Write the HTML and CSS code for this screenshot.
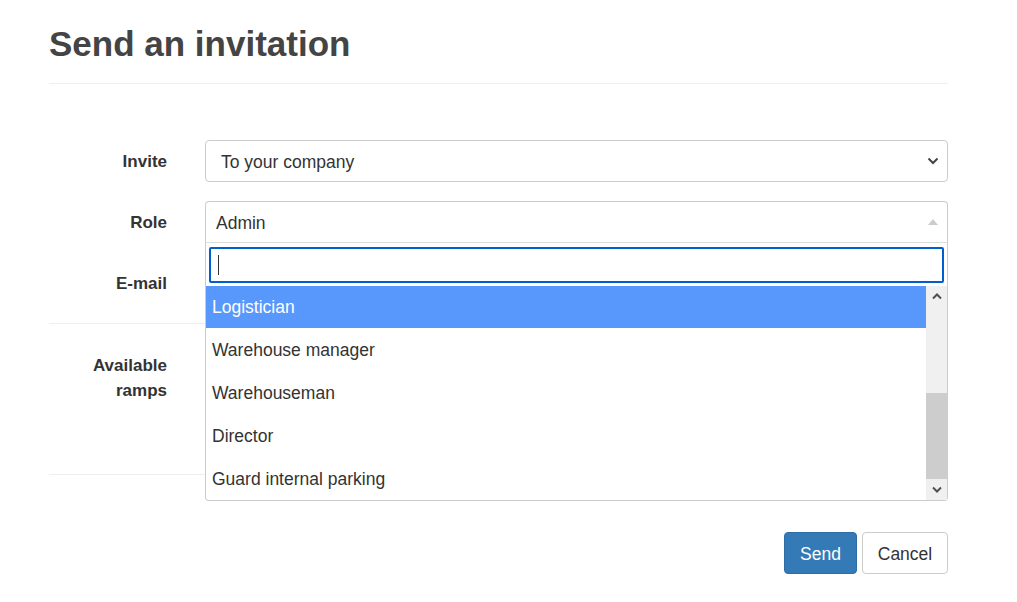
FILE: index.html
```html
<!DOCTYPE html>
<html>
<head>
<meta charset="utf-8">
<link rel="stylesheet" href="styles.css">
</head>
<body>
<div class="container">
  <h1 class="page-title">Send an invitation</h1>
  <form class="form">
    <div class="row">
      <label class="label">Invite</label>
      <div class="field">
        <div class="select">
          <span class="val">To your company</span>
          <svg class="chev" width="12" height="8" viewBox="0 0 12 8"><path d="M1.5 1.5 L6 6 L10.5 1.5" fill="none" stroke="#444" stroke-width="2"/></svg>
        </div>
      </div>
    </div>
    <div class="row">
      <label class="label">Role</label>
      <div class="field role-field">
        <div class="select2 open">
          <span class="val">Admin</span>
          <span class="tri"></span>
        </div>
        <div class="dropdown">
          <div class="search"><span class="caret"></span></div>
          <div class="results">
            <ul class="options">
              <li class="opt active">Logistician</li>
              <li class="opt">Warehouse manager</li>
              <li class="opt">Warehouseman</li>
              <li class="opt">Director</li>
              <li class="opt">Guard internal parking</li>
            </ul>
            <div class="scrollbar">
              <div class="sb-btn"><svg width="10" height="7" viewBox="0 0 10 7"><path d="M1 5.5 L5 1.5 L9 5.5" fill="none" stroke="#505050" stroke-width="2"/></svg></div>
              <div class="sb-track"><div class="sb-thumb"></div></div>
              <div class="sb-btn"><svg width="10" height="7" viewBox="0 0 10 7"><path d="M1 1.5 L5 5.5 L9 1.5" fill="none" stroke="#505050" stroke-width="2"/></svg></div>
            </div>
          </div>
        </div>
      </div>
    </div>
    <div class="row">
      <label class="label">E-mail</label>
      <div class="field">
        <div class="input"></div>
      </div>
    </div>
    <hr class="sep">
    <div class="row ramps">
      <label class="label">Available<br>ramps</label>
      <div class="field"></div>
    </div>
    <hr class="sep">
    <div class="actions">
      <button type="button" class="btn btn-primary">Send</button>
      <button type="button" class="btn btn-default">Cancel</button>
    </div>
  </form>
</div>
</body>
</html>
```
FILE: styles.css
```css
* { box-sizing: border-box; }
body {
  margin: 0;
  font-family: "Liberation Sans", Arial, sans-serif;
  font-size: 17.5px;
  color: #333;
  background: #fff;
}
.container {
  width: 899px;
  margin-left: 49px;
}
.page-title {
  margin: 24px 0 0;
  font-size: 35px;
  line-height: 40px;
  font-weight: bold;
  color: #444;
  padding-bottom: 19px;
  border-bottom: 1px solid #eee;
}
.form {
  margin-top: 56px;
}
.row {
  display: grid;
  grid-template-columns: 118px 1fr;
  column-gap: 38px;
  margin-bottom: 19px;
}
.label {
  text-align: right;
  font-weight: bold;
  font-size: 17px;
  padding-top: 9px;
  line-height: 25px;
}
.field { position: relative; }
.select, .select2, .input {
  height: 42px;
  border: 1px solid #ccc;
  border-radius: 4px;
  display: flex;
  align-items: center;
  background: #fff;
}
.val { padding-top: 2px; }
.select { padding-left: 15px; padding-right: 8px; justify-content: space-between; }
.select2 { padding-left: 10px; padding-right: 9px; justify-content: space-between; }
.select2.open { border-radius: 4px 4px 0 0; border-bottom-color: #ddd; }
.tri {
  width: 0; height: 0;
  border-left: 5px solid transparent;
  border-right: 5px solid transparent;
  border-bottom: 6px solid #ccc;
}
.dropdown {
  position: absolute;
  left: 0; right: 0;
  top: 42px;
  background: #fff;
  border: 1px solid #ccc;
  border-top: none;
  border-radius: 0 0 4px 4px;
  padding-top: 4px;
  z-index: 10;
}
.search {
  margin: 0 3px 3px;
  height: 36px;
  border: 2px solid #005fcc;
  border-radius: 2px;
  display: flex;
  align-items: center;
  padding-left: 7px;
}
.caret {
  width: 1px;
  height: 20px;
  background: #333;
}
.results {
  display: flex;
  height: 214px;
  overflow: hidden;
}
.options {
  list-style: none;
  margin: 0;
  padding: 0;
  flex: 1;
}
.opt {
  height: 43px;
  line-height: 42px;
  padding-top: 1px;
  padding-left: 6px;
}
.opt.active { background: #5897fb; color: #fff; height: 42px; line-height: 41px; }
.scrollbar {
  width: 21px;
  background: #f0f0f0;
  display: flex;
  flex-direction: column;
}
.sb-btn {
  height: 21px;
  display: flex;
  align-items: center;
  justify-content: center;
}
.sb-track {
  flex: 1;
  display: flex;
  flex-direction: column;
  justify-content: flex-end;
}
.sb-thumb {
  height: 86px;
  background: #cdcdcd;
}
.sep {
  border: 0;
  border-top: 1px solid #eee;
  margin: 0;
}
.row.ramps { margin: 20px 0 20px; height: 110px; }
.actions {
  display: flex;
  justify-content: flex-end;
  gap: 5px;
  margin-top: 57px;
}
.btn {
  font-family: inherit;
  font-size: 17.5px;
  height: 42px;
  border-radius: 4px;
  border: 1px solid #ccc;
  padding: 2px 0 0;
  line-height: 38px;
}
.btn-primary { background: #337ab7; border-color: #2e6da4; color: #fff; width: 73px; }
.btn-default { background: #fff; color: #333; width: 86px; }
```
